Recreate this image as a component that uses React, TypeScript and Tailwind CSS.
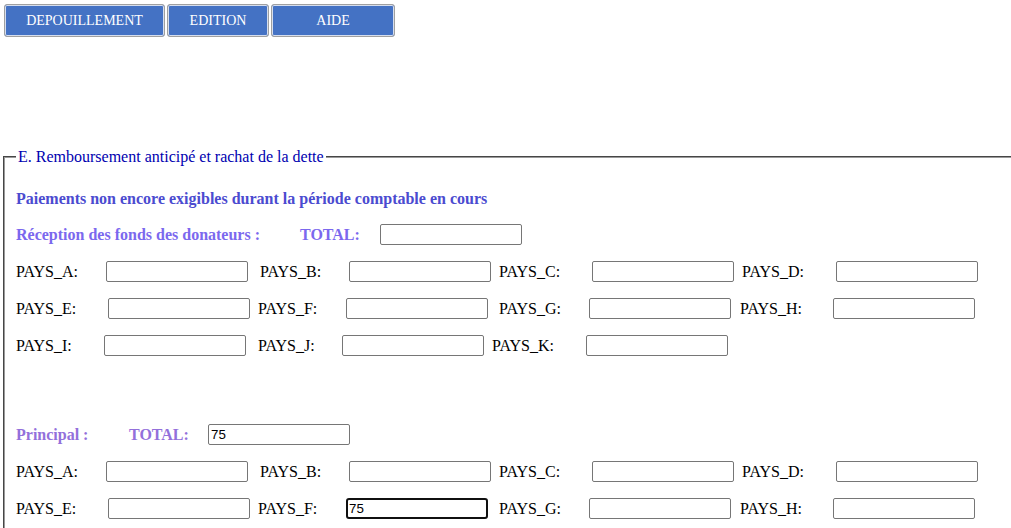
import React from 'react';

type Cell = { label: string; labelW: number; gap: number; value?: string; focused?: boolean };

const serif = { fontFamily: '"Liberation Serif", "Times New Roman", serif' };

const groupA: Cell[][] = [
  [
    { label: 'PAYS_A:', labelW: 90, gap: 0 },
    { label: 'PAYS_B:', labelW: 89, gap: 12 },
    { label: 'PAYS_C:', labelW: 93, gap: 8 },
    { label: 'PAYS_D:', labelW: 94, gap: 8 },
  ],
  [
    { label: 'PAYS_E:', labelW: 92, gap: 0 },
    { label: 'PAYS_F:', labelW: 88, gap: 8 },
    { label: 'PAYS_G:', labelW: 90, gap: 11 },
    { label: 'PAYS_H:', labelW: 93, gap: 9 },
  ],
  [
    { label: 'PAYS_I:', labelW: 88, gap: 0 },
    { label: 'PAYS_J:', labelW: 84, gap: 12 },
    { label: 'PAYS_K:', labelW: 94, gap: 8 },
  ],
];

const groupB: Cell[][] = [
  groupA[0],
  [
    { label: 'PAYS_E:', labelW: 92, gap: 0 },
    { label: 'PAYS_F:', labelW: 88, gap: 8, value: '75', focused: true },
    { label: 'PAYS_G:', labelW: 90, gap: 11 },
    { label: 'PAYS_H:', labelW: 93, gap: 9 },
  ],
];

function TextBox({ value, focused }: { value?: string; focused?: boolean }) {
  return (
    <input
      type="text"
      defaultValue={value}
      className={
        'h-[21px] w-[142px] shrink-0 bg-white text-[13.33px] font-normal text-black outline-none ' +
        (focused
          ? 'rounded-[3px] border-2 border-[#101010] px-[1px]'
          : 'rounded-[2px] border border-[#767676] px-[2px]')
      }
      style={{ fontFamily: '"Liberation Sans", Arial, sans-serif' }}
    />
  );
}

function PaysRow({ cells }: { cells: Cell[] }) {
  return (
    <div className="flex h-[21px] items-center">
      {cells.map((c) => (
        <React.Fragment key={c.label}>
          <span
            className="shrink-0 text-[16px] leading-none text-black"
            style={{ width: c.labelW, marginLeft: c.gap }}
          >
            {c.label}
          </span>
          <TextBox value={c.value} focused={c.focused} />
        </React.Fragment>
      ))}
    </div>
  );
}

function NavButton({ label, w }: { label: string; w: string }) {
  return (
    <button
      className={`${w} h-[33px] rounded-[3px] border border-[#a0a0a0] bg-[#4472c4] text-[14px] text-white shadow-[inset_0_0_0_1px_#d6deee]`}
      style={serif}
    >
      {label}
    </button>
  );
}

export default function App() {
  return (
    <div className="w-[1011px] overflow-hidden bg-white pb-4" style={serif}>
      <div className="flex gap-[2px] pl-[4px] pt-[4px]">
        <NavButton label="DEPOUILLEMENT" w="w-[161px]" />
        <NavButton label="EDITION" w="w-[102px]" />
        <NavButton label="AIDE" w="w-[124px]" />
      </div>

      <fieldset className="ml-[3px] mt-[108px] w-[1060px] border-2 border-[#9a9a9a] pb-6 pl-[11px] [border-style:groove]">
        <legend className="px-[2px] text-[16px] text-[#0000b0]" style={serif}>
          E. Remboursement anticipé et rachat de la dette
        </legend>

        <p className="mt-[18px] text-[16px] font-bold text-[#4b4bd0]">
          Paiements non encore exigibles durant la période comptable en cours
        </p>

        <div className="mt-[13px] flex h-[21px] items-center text-[16px] font-bold text-[#7b68ee]">
          <span className="w-[284px] shrink-0">Réception des fonds des donateurs :</span>
          <span className="w-[80px] shrink-0">TOTAL:</span>
          <TextBox />
        </div>

        <div className="mt-[16px] flex flex-col gap-[16px]">
          {groupA.map((r, i) => (
            <PaysRow key={i} cells={r} />
          ))}
        </div>

        <div className="mt-[68px] flex h-[21px] items-center text-[16px] font-bold text-[#9370db]">
          <span className="w-[113px] shrink-0">Principal :</span>
          <span className="w-[79px] shrink-0">TOTAL:</span>
          <TextBox value="75" />
        </div>

        <div className="mt-[16px] flex flex-col gap-[16px]">
          {groupB.map((r, i) => (
            <PaysRow key={i} cells={r} />
          ))}
        </div>
      </fieldset>
    </div>
  );
}
